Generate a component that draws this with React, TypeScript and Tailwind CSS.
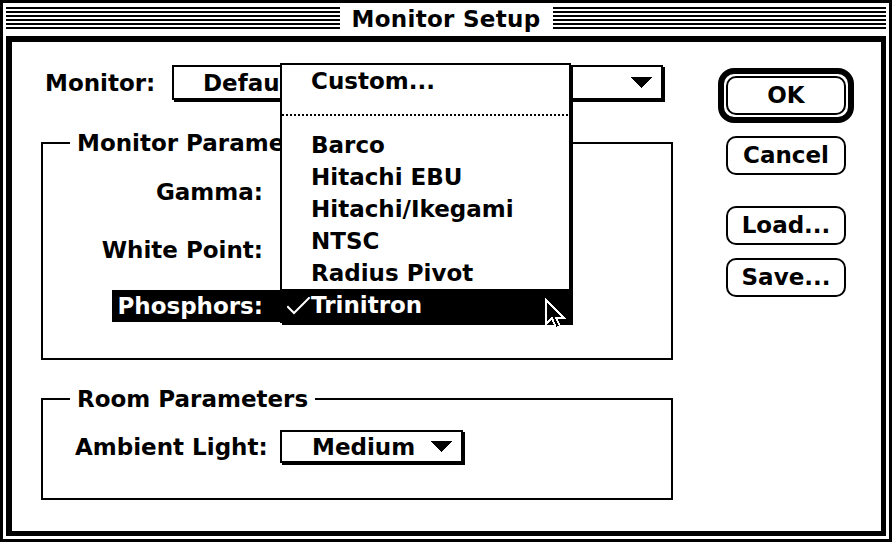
import React from 'react';

const stripes = 'bg-[repeating-linear-gradient(to_bottom,#000_0px,#000_2px,#fff_2px,#fff_4px)]';
const dots = 'bg-[repeating-linear-gradient(to_right,#000_0px,#000_2px,transparent_2px,transparent_4px)]';

const Triangle: React.FC = () => (
  <svg width="22" height="11" viewBox="0 0 22 11" className="shrink-0" shapeRendering="crispEdges">
    <polygon points="0,0 22,0 11,11" fill="#000" />
  </svg>
);

const PopUp: React.FC<{ value: string; className: string }> = ({ value, className }) => (
  <div className={`flex items-center justify-between overflow-hidden border-2 border-black bg-white shadow-[2px_2px_0_0_#000] ${className}`}>
    <span className="leading-[28px] whitespace-nowrap">{value}</span>
    <Triangle />
  </div>
);

const Button: React.FC<{ label: string; className?: string }> = ({ label, className = '' }) => (
  <div className={`w-[120px] h-[39px] rounded-[10px] border-2 border-black flex items-center justify-center leading-none ${className}`}>
    {label}
  </div>
);

const Legend: React.FC<{ text: string }> = ({ text }) => (
  <span className="absolute left-[27px] -top-[17px] px-[7px] bg-white leading-[32px]">{text}</span>
);

const Check: React.FC = () => (
  <svg width="24" height="18" viewBox="0 0 24 18" className="ml-[5px] mt-[2px]">
    <polyline points="1,10 7,16 22,1" fill="none" stroke="#fff" strokeWidth="2" strokeLinecap="square" />
  </svg>
);

const Cursor: React.FC = () => (
  <svg width="24" height="34" viewBox="0 0 24 34" shapeRendering="crispEdges">
    <polygon
      points="2,2 2,26 8,20 12,30 16,28 12,20 20,20"
      fill="#000"
      stroke="#fff"
      strokeWidth="2"
      strokeLinejoin="miter"
    />
  </svg>
);

const menuItems = ['Barco', 'Hitachi EBU', 'Hitachi/Ikegami', 'NTSC', 'Radius Pivot'];

export default function App() {
  return (
    <div className="w-[892px] h-[542px] border-[3px] border-black bg-white flex flex-col font-['DejaVu_Sans',sans-serif] font-bold text-[23px] text-black select-none">
      {/* title bar */}
      <div className="flex h-[33px] px-[3px] shrink-0">
        <div className={`flex-1 h-[22px] mt-[4px] ${stripes}`}></div>
        <span className="px-[12px] leading-[33px] tracking-[0.3px]">Monitor Setup</span>
        <div className={`flex-1 h-[22px] mt-[4px] ${stripes}`}></div>
      </div>

      {/* dialog body */}
      <div className="relative flex-1 flex mx-[3px] mb-[3px] border-black border-l-[6px] border-t-[6px] border-r-[5px] border-b-[5px] pl-[29px] pt-[23px]">
        <div className="w-[632px] flex flex-col">
          <div className="flex items-center h-[35px]">
            <span className="w-[131px] pl-[4px] leading-[32px]">Monitor:</span>
            <PopUp value="Default" className="w-[491px] h-[35px] pl-[29px] pr-[9px]" />
          </div>

          <div className="relative mt-[42px] h-[218px] border-2 border-black pt-[32px]">
            <Legend text="Monitor Parameters" />
            <div className="w-[239px] h-[32px] flex justify-end leading-[32px]">
              <span className="pr-[19px]">Gamma:</span>
            </div>
            <div className="w-[239px] h-[32px] mt-[26px] flex justify-end leading-[32px]">
              <span className="pr-[19px]">White Point:</span>
            </div>
            <div className="w-[239px] h-[32px] mt-[24px] flex justify-end leading-[32px]">
              <span className="bg-black text-white pl-[5px] pr-[19px]">Phosphors:</span>
            </div>
          </div>

          <div className="relative mt-[38px] h-[102px] border-2 border-black">
            <Legend text="Room Parameters" />
            <div className="flex items-center mt-[30px] pl-[32px]">
              <span className="w-[205px] leading-[32px]">Ambient Light:</span>
              <PopUp value="Medium" className="w-[183px] h-[33px] pl-[30px] pr-[9px]" />
            </div>
          </div>
        </div>

        <div className="ml-[45px] w-[136px] flex flex-col items-center pt-[3px]">
          <div className="rounded-[16px] border-[6px] border-black p-[2px]">
            <Button label="OK" />
          </div>
          <Button label="Cancel" className="mt-[13px]" />
          <Button label="Load..." className="mt-[31px]" />
          <Button label="Save..." className="mt-[13px]" />
        </div>

        {/* open pop-up menu */}
        <div className="absolute left-[268px] top-[21px] w-[291px] border-2 border-black bg-white shadow-[2px_2px_0_0_#000] flex flex-col">
          <div className="h-[32px] flex items-center leading-[32px]">
            <span className="w-[29px] shrink-0"></span>
            <span>Custom...</span>
          </div>
          <div className="h-[32px] pt-[17px]">
            <div className={`h-[2px] ${dots}`}></div>
          </div>
          {menuItems.map((item) => (
            <div key={item} className="h-[32px] flex items-center leading-[32px]">
              <span className="w-[29px] shrink-0"></span>
              <span>{item}</span>
            </div>
          ))}
          <div className="h-[32px] flex items-center leading-[32px] bg-black text-white">
            <span className="w-[29px] shrink-0 flex items-center"><Check /></span>
            <span>Trinitron</span>
          </div>
        </div>

        <div className="absolute left-[532px] top-[256px]">
          <Cursor />
        </div>
      </div>
    </div>
  );
}
